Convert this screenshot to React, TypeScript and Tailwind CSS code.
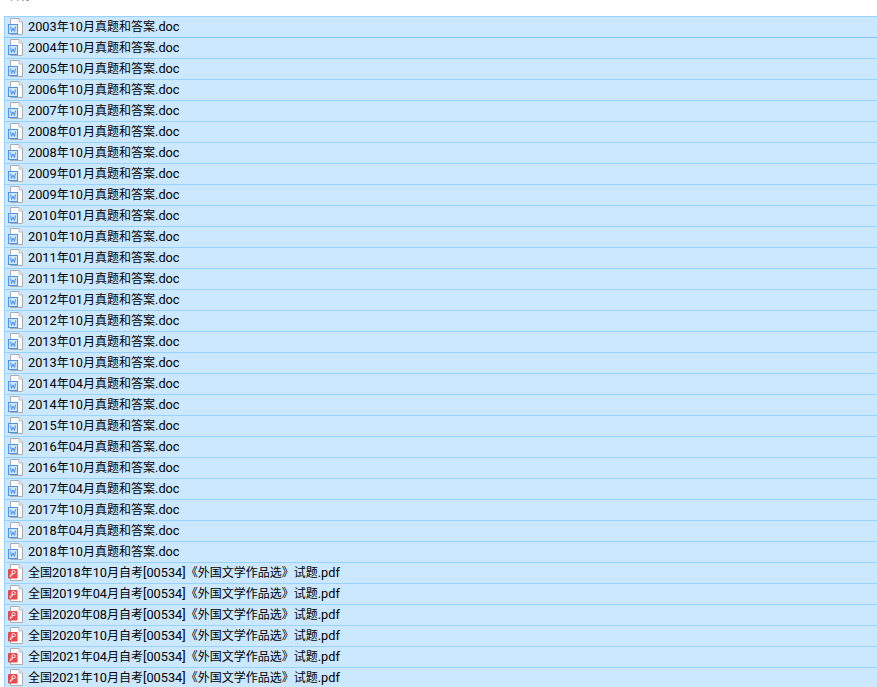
const docs = [
  "2003年10月", "2004年10月", "2005年10月", "2006年10月", "2007年10月", "2008年01月", "2008年10月",
  "2009年01月", "2009年10月", "2010年01月", "2010年10月", "2011年01月", "2011年10月", "2012年01月",
  "2012年10月", "2013年01月", "2013年10月", "2014年04月", "2014年10月", "2015年10月", "2016年04月",
  "2016年10月", "2017年04月", "2017年10月", "2018年04月", "2018年10月",
]

const pdfs = ["2018年10月", "2019年04月", "2020年08月", "2020年10月", "2021年04月", "2021年10月"]

function Page() {
  return (
    <>
      <path d="M2.500.5h8.500l3.500 3.500v12.500h-12z" fill="#fdfdfe" stroke="#a9adb2" />
      <path d="M11 .5v3.500h3.500" fill="#e6ebf0" stroke="#bcc1c6" />
    </>
  )
}

function DocIcon() {
  return (
    <svg width="16" height="18" viewBox="0 0 16 18" className="shrink-0">
      <Page />
      <rect x="0.500" y="6.500" width="9" height="9" fill="#d3e5fa" stroke="#4d94e6" />
      <path d="M2.500 8.500l1 5 1.500-3.500 1.500 3.500 1-5" fill="none" stroke="#3b86e0" strokeWidth="0.900" />
    </svg>
  )
}

function PdfIcon() {
  return (
    <svg width="16" height="18" viewBox="0 0 16 18" className="shrink-0">
      <Page />
      <rect x="0" y="5" width="9.500" height="9.500" rx="1" fill="#e8484e" />
      <path d="M5.200 6.500c-1.700 0-1.800 2.400-.4 2.800-1.200.5-2.800 1.500-2.600 3.300 1.500 0 2-2.200 2.600-3.300 1 .4 2.400.3 2.600-.7.200-1.200-1-2.100-2.200-2.100z" fill="none" stroke="#ffffff" strokeWidth="1" />
    </svg>
  )
}

// the CJK glyphs sit at 12px, latin text at a slightly larger size
function Label({ text }: { text: string }) {
  const parts = text.split(/([\u3000-\u9fff]+)/).filter(Boolean)
  return (
    <span className="whitespace-pre text-[12.75px] text-black">
      {parts.map((p, i) =>
        /[\u3000-\u9fff]/.test(p) ? (
          <span key={i} className="text-[12px]">{p}</span>
        ) : (
          <span key={i}>{p}</span>
        ),
      )}
    </span>
  )
}

function Row({ icon, label, focused }: { icon: React.ReactNode; label: string; focused?: boolean }) {
  return (
    <div
      className={`flex h-[21px] items-center gap-1 border-t border-l bg-[#cce8ff] pl-[3px] ${
        focused ? "border-t-[#7fc3ff] border-l-[#99d1ff]" : "border-[#99d1ff]"
      }`}
    >
      {icon}
      <Label text={label} />
    </div>
  )
}

export default function App() {
  return (
    <div className="h-[687px] w-[877px] overflow-hidden bg-white font-['Roboto','Noto_Sans_CJK_SC',sans-serif]">
      <div className="h-4 overflow-hidden pl-[8px]">
        <div className="-mt-[12px] text-[12px] leading-[16px] text-[#4c607a]">名称</div>
      </div>
      <div className="ml-[4px]">
        {docs.map((d, i) => (
          <Row key={d} icon={<DocIcon />} label={`${d}真题和答案.doc`} focused={i === 1} />
        ))}
        {pdfs.map((d) => (
          <Row key={d} icon={<PdfIcon />} label={`全国${d}自考[00534]《外国文学作品选》试题.pdf`} />
        ))}
      </div>
    </div>
  )
}
